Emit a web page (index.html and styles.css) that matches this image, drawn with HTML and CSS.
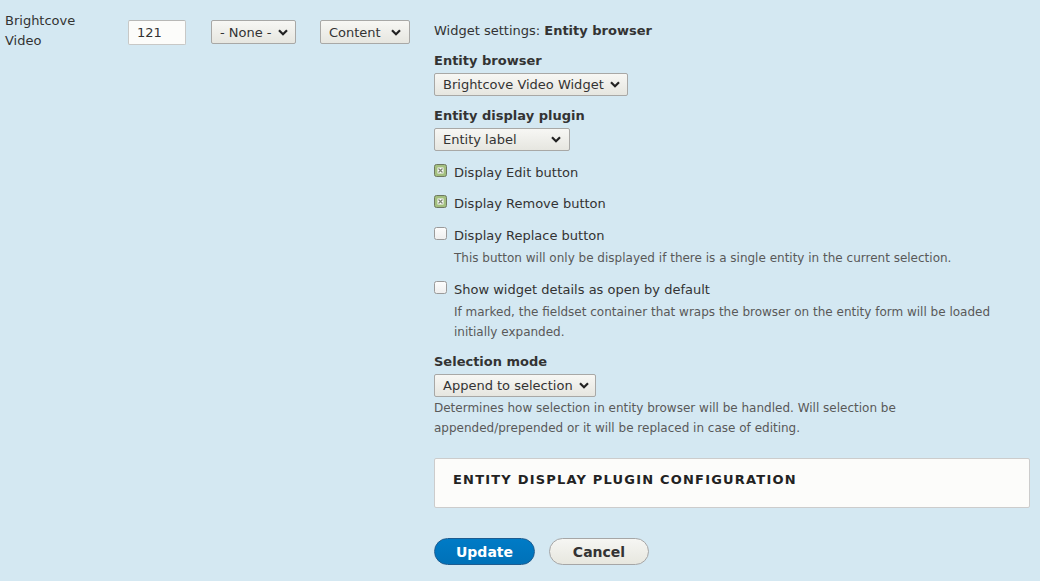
FILE: index.html
```html
<!DOCTYPE html>
<html>
<head>
<meta charset="utf-8">
<link rel="stylesheet" href="styles.css">
</head>
<body>
<div class="row">
  <div class="c-label">Brightcove<br>Video</div>
  <div class="c-weight"><span class="textinput">121</span></div>
  <div class="c-parent"><span class="select top w-none">- None -<svg class="chev" viewBox="0 0 10 7"><path d="M1 1.2 L5 5.2 L9 1.2" /></svg></span></div>
  <div class="c-region"><span class="select top w-content">Content<svg class="chev" viewBox="0 0 10 7"><path d="M1 1.2 L5 5.2 L9 1.2" /></svg></span></div>
  <div class="c-settings">
    <div class="heading">Widget settings: <b>Entity browser</b></div>

    <div class="item">
      <div class="label">Entity browser</div>
      <span class="select w-browser">Brightcove Video Widget<svg class="chev" viewBox="0 0 10 7"><path d="M1 1.2 L5 5.2 L9 1.2" /></svg></span>
    </div>

    <div class="item">
      <div class="label">Entity display plugin</div>
      <span class="select w-plugin">Entity label<svg class="chev" viewBox="0 0 10 7"><path d="M1 1.2 L5 5.2 L9 1.2" /></svg></span>
    </div>

    <div class="check first">
      <svg class="cb" viewBox="0 0 13 13"><rect x="0.5" y="0.5" width="12" height="12" rx="2" fill="#a3bf7f" stroke="#6e7861"/><rect x="3.5" y="3.5" width="6" height="6" fill="#fff"/><path d="M4.5 4.5 L8.5 8.5 M8.5 4.5 L4.5 8.5" stroke="#7b8270" stroke-width="1.2"/></svg>
      <span class="ctext">Display Edit button</span>
    </div>

    <div class="check">
      <svg class="cb" viewBox="0 0 13 13"><rect x="0.5" y="0.5" width="12" height="12" rx="2" fill="#a3bf7f" stroke="#6e7861"/><rect x="3.5" y="3.5" width="6" height="6" fill="#fff"/><path d="M4.5 4.5 L8.5 8.5 M8.5 4.5 L4.5 8.5" stroke="#7b8270" stroke-width="1.2"/></svg>
      <span class="ctext">Display Remove button</span>
    </div>

    <div class="check spaced">
      <svg class="cb" viewBox="0 0 13 13"><defs><linearGradient id="g1" x1="0" y1="0" x2="0" y2="1"><stop offset="0" stop-color="#fdfdfd"/><stop offset="1" stop-color="#eeeeee"/></linearGradient></defs><rect x="0.5" y="0.5" width="12" height="12" rx="2" fill="url(#g1)" stroke="#9a9a9a"/></svg>
      <span class="ctext">Display Replace button</span>
      <div class="desc">This button will only be displayed if there is a single entity in the current selection.</div>
    </div>

    <div class="check spaced">
      <svg class="cb" viewBox="0 0 13 13"><defs><linearGradient id="g2" x1="0" y1="0" x2="0" y2="1"><stop offset="0" stop-color="#fdfdfd"/><stop offset="1" stop-color="#eeeeee"/></linearGradient></defs><rect x="0.5" y="0.5" width="12" height="12" rx="2" fill="url(#g2)" stroke="#9a9a9a"/></svg>
      <span class="ctext">Show widget details as open by default</span>
      <div class="desc">If marked, the fieldset container that wraps the browser on the entity form will be loaded initially expanded.</div>
    </div>

    <div class="item sel-mode">
      <div class="label">Selection mode</div>
      <span class="select w-mode">Append to selection<svg class="chev" viewBox="0 0 10 7"><path d="M1 1.2 L5 5.2 L9 1.2" /></svg></span>
      <div class="desc plain">Determines how selection in entity browser will be handled. Will selection be appended/prepended or it will be replaced in case of editing.</div>
    </div>

    <div class="fieldset">
      <div class="legend">Entity display plugin configuration</div>
    </div>

    <div class="actions">
      <span class="btn primary">Update</span>
      <span class="btn">Cancel</span>
    </div>
  </div>
</div>
</body>
</html>
```

FILE: styles.css
```css
html, body {
  margin: 0;
  padding: 0;
}
body {
  background: #d4e8f2;
  font-family: "DejaVu Sans", Verdana, sans-serif;
  font-size: 13px;
  line-height: 20px;
  color: #333;
  width: 1040px;
  height: 581px;
  overflow: hidden;
}
.row {
  display: flex;
  align-items: flex-start;
}
.c-label {
  width: 123px;
  padding: 11px 0 0 5px;
  color: #333;
}
.c-weight {
  padding-top: 20px;
  width: 83px;
}
.textinput {
  display: block;
  box-sizing: border-box;
  width: 58px;
  height: 25px;
  border: 1px solid #c8c8c6;
  border-top-color: #b8b8b6;
  border-radius: 2px;
  background: #fcfcfa;
  padding: 1px 0 0 8px;
  line-height: 21px;
  color: #333;
}
.c-parent {
  padding-top: 20px;
  width: 109px;
}
.c-region {
  padding-top: 20px;
  width: 114px;
}
.select {
  display: inline-flex;
  align-items: center;
  justify-content: space-between;
  box-sizing: border-box;
  height: 24px;
  border: 1px solid #a8a8a6;
  border-radius: 2px;
  background: linear-gradient(#f7f7f4, #e6e6e0);
  padding: 0 8px 0 8px;
  color: #333;
  white-space: nowrap;
  line-height: 20px;
}
.select.top {
  padding-top: 1px;
}
.chev {
  width: 10px;
  height: 7px;
  margin-left: 6px;
  flex: none;
}
.chev path {
  fill: none;
  stroke: #222;
  stroke-width: 2.2;
  stroke-linecap: butt;
}
.w-none { width: 85px; }
.w-content { width: 90px; }
.w-browser { width: 194px; }
.w-plugin { width: 136px; }
.w-mode { width: 162px; }

.c-settings {
  width: 596px;
  padding-top: 21px;
}
.heading {
  line-height: 20px;
}
.heading b {
  font-weight: bold;
}
.item {
  margin-top: 10px;
}
.label {
  font-weight: bold;
  line-height: 20px;
  margin-bottom: 2px;
}
.item .select {
  height: 23px;
}
.check {
  position: relative;
  padding-left: 20px;
  margin-top: 11px;
}
.check.first {
  margin-top: 12px;
}
.check.spaced {
  margin-top: 12px;
}
.cb {
  position: absolute;
  left: 0;
  top: 1px;
  width: 13px;
  height: 13px;
}
.ctext {
  display: block;
  line-height: 20px;
}
.desc {
  font-size: 12px;
  line-height: 20px;
  color: #595959;
  margin-top: 2px;
  padding-right: 10px;
}
.desc.plain {
  margin-top: 1px;
  padding-right: 130px;
}
.sel-mode {
  margin-top: 10px;
}
.fieldset {
  margin-top: 20px;
  box-sizing: border-box;
  width: 596px;
  height: 50px;
  border: 1px solid #cccccc;
  border-radius: 2px;
  background: #fcfcfa;
  padding: 11px 0 0 18px;
}
.legend {
  font-weight: bold;
  font-size: 13px;
  letter-spacing: 1.2px;
  text-transform: uppercase;
  line-height: 20px;
  color: #222;
}
.actions {
  margin-top: 30px;
  display: flex;
  gap: 14px;
}
.btn {
  display: inline-flex;
  align-items: center;
  justify-content: center;
  box-sizing: border-box;
  height: 27px;
  width: 100px;
  border: 1px solid #a6a6a6;
  border-radius: 20px;
  background: linear-gradient(#f6f6f3, #e7e7df);
  font-weight: bold;
  font-size: 14px;
  color: #333;
}
.btn.primary {
  width: 101px;
  border-color: #1e5c90;
  background: linear-gradient(#007bc6, #0071b8);
  color: #fff;
}
```
